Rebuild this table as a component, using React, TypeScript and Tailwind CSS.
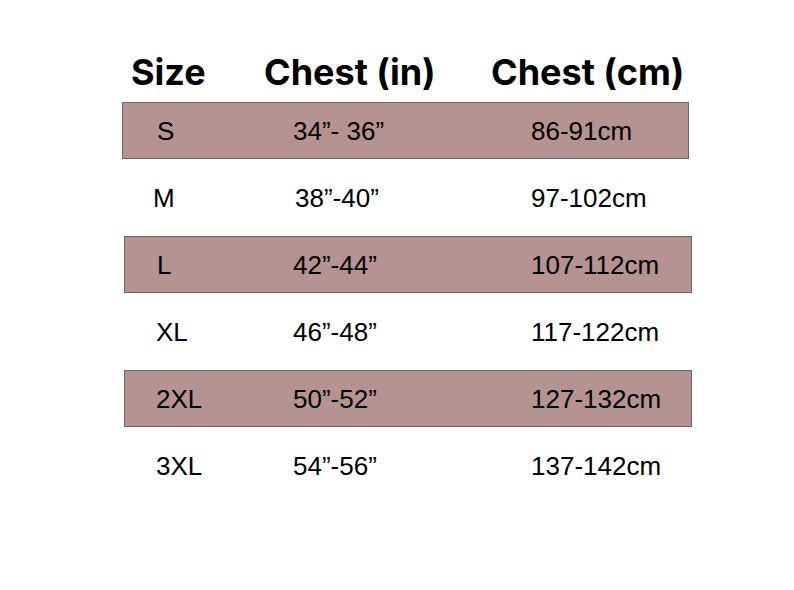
const rows = [
  { size: "S", inch: "34”- 36”", cm: "86-91cm", boxed: true, ml: "ml-[122px]", w: "w-[567px]", sizeW: "w-[136px]", inchW: "w-[238px]", pl: "pl-[34px]" },
  { size: "M", inch: "38”-40”", cm: "97-102cm", boxed: false, ml: "ml-[122px]", w: "w-[567px]", sizeW: "w-[142px]", inchW: "w-[236px]", pl: "pl-[30px]" },
  { size: "L", inch: "42”-44”", cm: "107-112cm", boxed: true, ml: "ml-[124px]", w: "w-[568px]", sizeW: "w-[136px]", inchW: "w-[238px]", pl: "pl-[32px]" },
  { size: "XL", inch: "46”-48”", cm: "117-122cm", boxed: false, ml: "ml-[124px]", w: "w-[568px]", sizeW: "w-[137px]", inchW: "w-[238px]", pl: "pl-[31px]" },
  { size: "2XL", inch: "50”-52”", cm: "127-132cm", boxed: true, ml: "ml-[124px]", w: "w-[568px]", sizeW: "w-[137px]", inchW: "w-[238px]", pl: "pl-[31px]" },
  { size: "3XL", inch: "54”-56”", cm: "137-142cm", boxed: false, ml: "ml-[124px]", w: "w-[568px]", sizeW: "w-[137px]", inchW: "w-[238px]", pl: "pl-[31px]" },
];

export default function App() {
  return (
    <div className="w-[794px] h-[590px] bg-white text-black overflow-hidden">
      <div className="pt-[54px] pl-[131px] flex font-['Inter',sans-serif] font-bold text-[36px] leading-none h-[102px]">
        <div className="w-[133px]">Size</div>
        <div className="w-[227px]">Chest (in)</div>
        <div>Chest (cm)</div>
      </div>
      <div className="flex flex-col gap-[10px] font-['Liberation_Sans',Arial,sans-serif] text-[26px] leading-none">
        {rows.map((r) => (
          <div
            key={r.size}
            className={`${r.ml} ${r.w} ${r.pl} h-[57px] flex items-center border ${
              r.boxed ? "bg-[#b59392] border-[#6f6567]" : "border-transparent"
            }`}
          >
            <div className={r.sizeW}>{r.size}</div>
            <div className={r.inchW}>{r.inch}</div>
            <div>{r.cm}</div>
          </div>
        ))}
      </div>
    </div>
  );
}
